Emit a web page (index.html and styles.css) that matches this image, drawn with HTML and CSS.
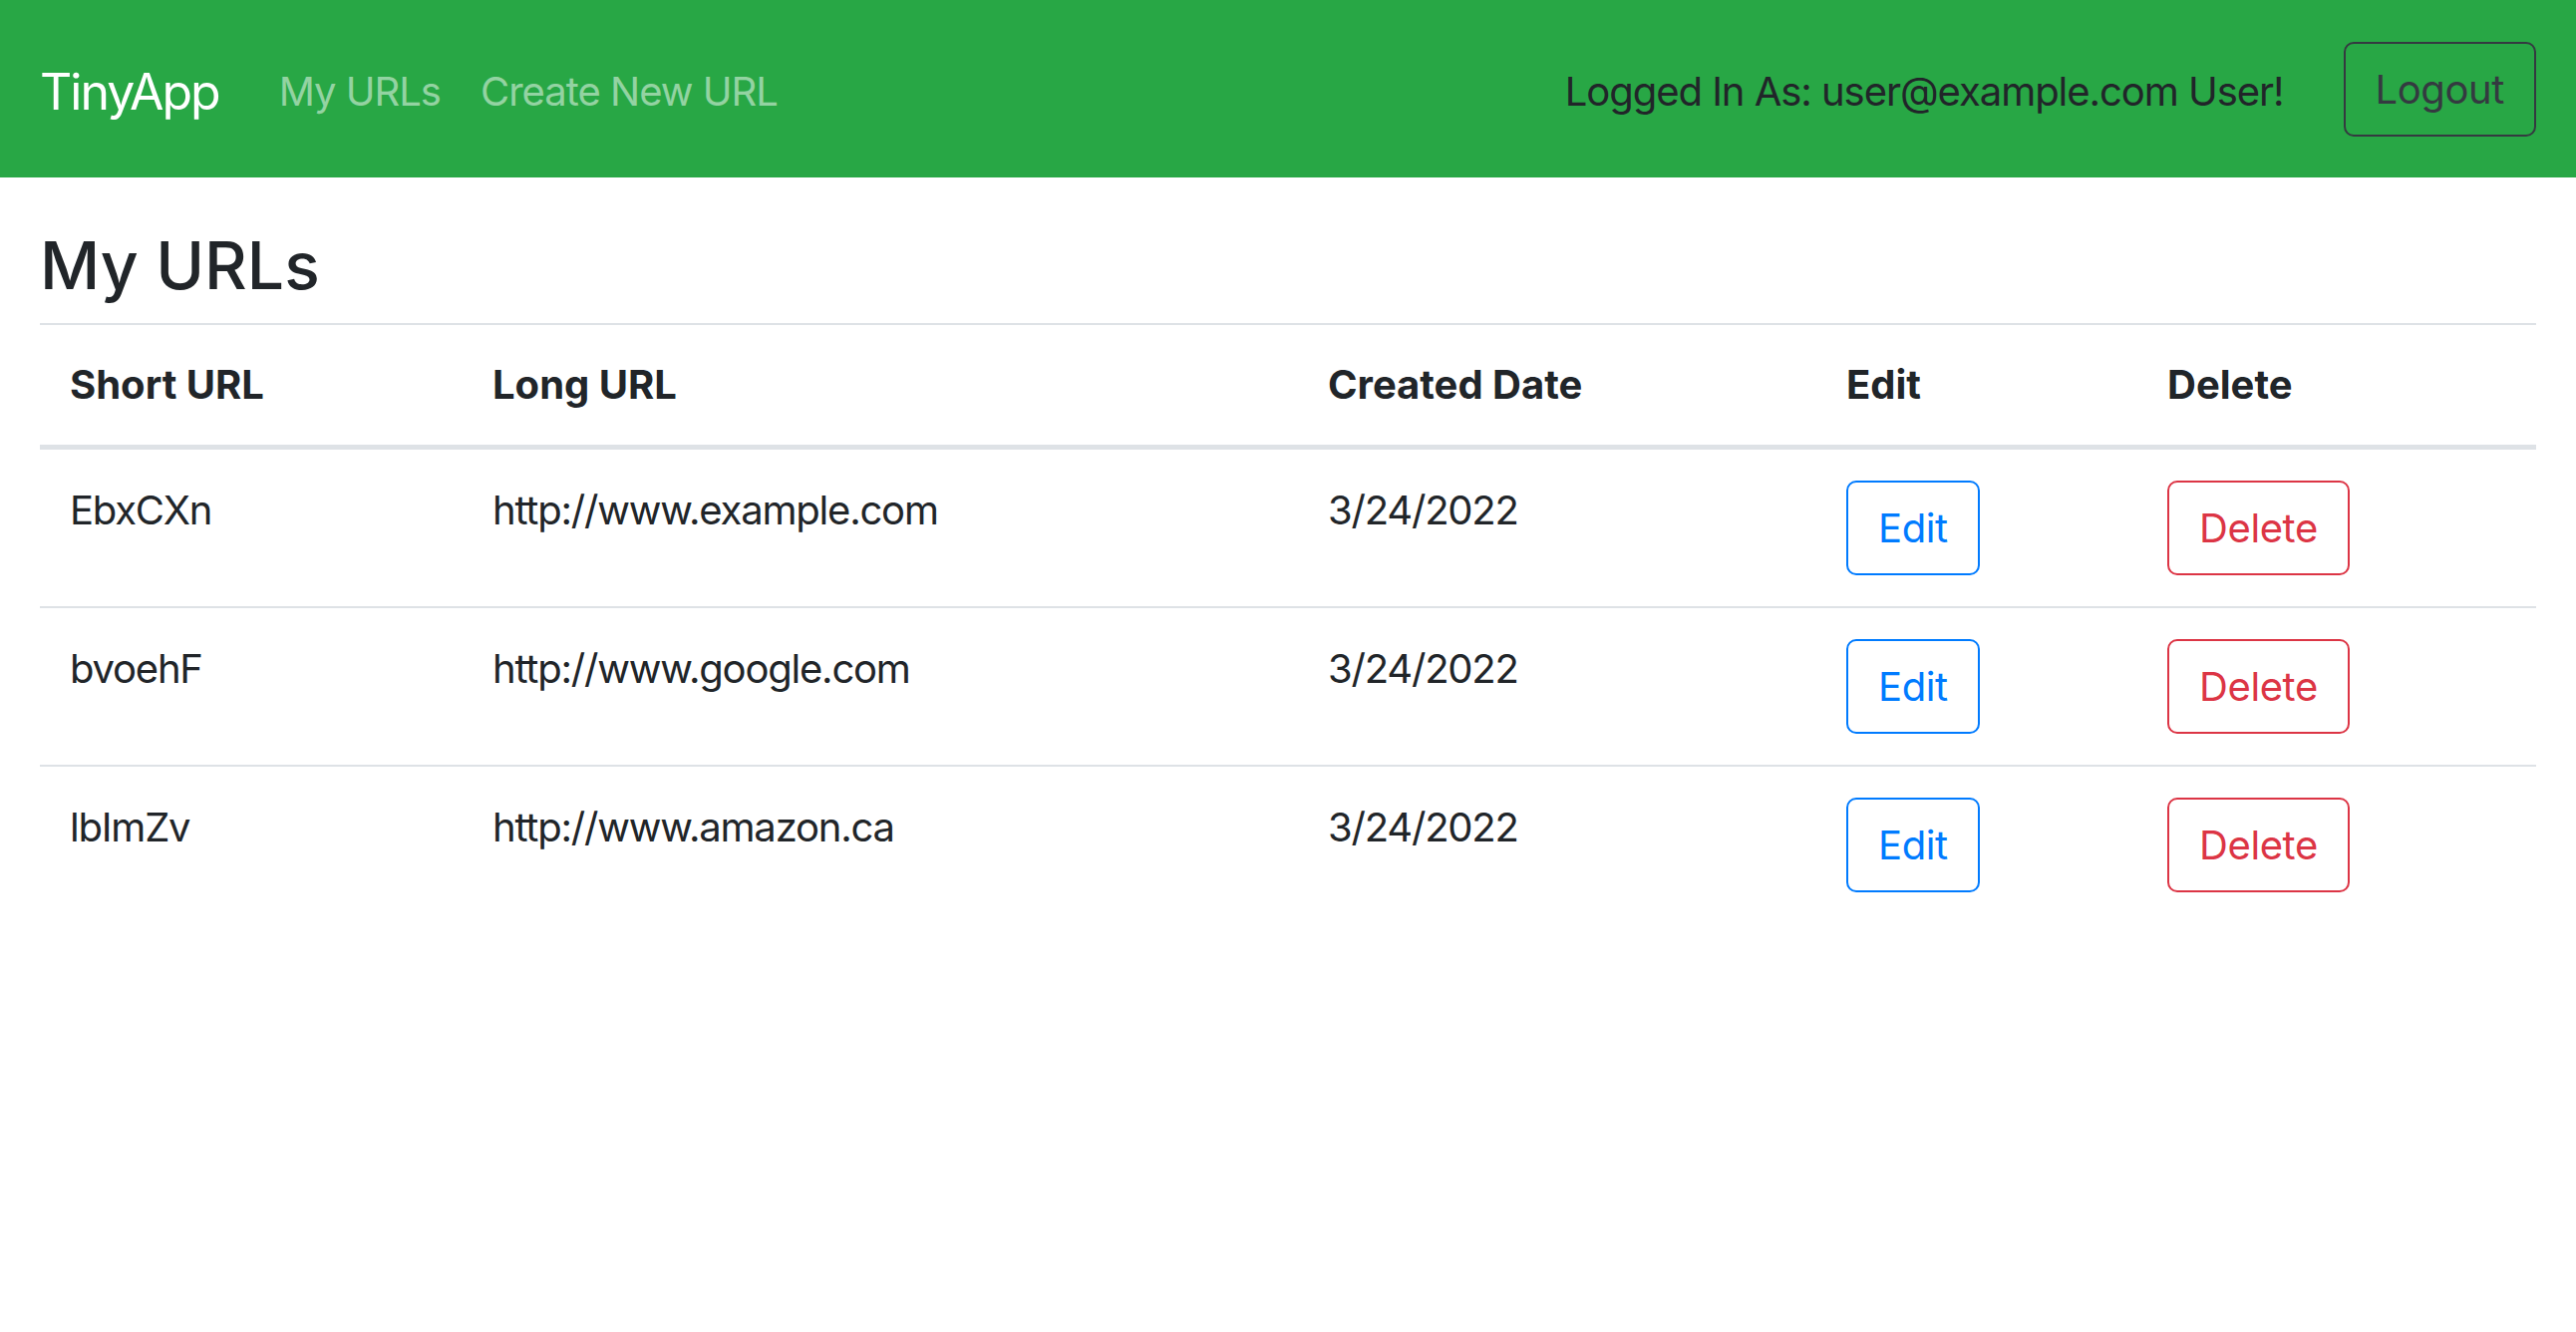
FILE: index.html
```html
<!DOCTYPE html>
<html lang="en">
<head>
<meta charset="utf-8">
<title>TinyApp</title>
<link rel="stylesheet" href="styles.css">
</head>
<body>
<nav class="navbar">
  <a class="brand" href="#">TinyApp</a>
  <div class="nav-links">
    <a class="nav-link" href="#">My URLs</a>
    <a class="nav-link" href="#">Create New URL</a>
  </div>
  <div class="nav-right">
    <span class="user-text">Logged In As: user@example.com User!</span>
    <button class="btn btn-dark-outline" type="button">Logout</button>
  </div>
</nav>
<main class="content">
  <h1 class="title">My URLs</h1>
  <table class="url-table">
    <thead>
      <tr>
        <th class="col-short">Short URL</th>
        <th class="col-long">Long URL</th>
        <th class="col-date">Created Date</th>
        <th class="col-edit">Edit</th>
        <th class="col-delete">Delete</th>
      </tr>
    </thead>
    <tbody>
      <tr>
        <td>EbxCXn</td>
        <td>http://www.example.com</td>
        <td>3/24/2022</td>
        <td><button class="btn btn-blue-outline" type="button">Edit</button></td>
        <td><button class="btn btn-red-outline" type="button">Delete</button></td>
      </tr>
      <tr>
        <td>bvoehF</td>
        <td>http://www.google.com</td>
        <td>3/24/2022</td>
        <td><button class="btn btn-blue-outline" type="button">Edit</button></td>
        <td><button class="btn btn-red-outline" type="button">Delete</button></td>
      </tr>
      <tr>
        <td>lbImZv</td>
        <td>http://www.amazon.ca</td>
        <td>3/24/2022</td>
        <td><button class="btn btn-blue-outline" type="button">Edit</button></td>
        <td><button class="btn btn-red-outline" type="button">Delete</button></td>
      </tr>
    </tbody>
  </table>
</main>
</body>
</html>
```

FILE: styles.css
```css
* { box-sizing: border-box; }

html, body {
  margin: 0;
  padding: 0;
  background: #ffffff;
}

body {
  font-family: "Inter", "Roboto", "Liberation Sans", sans-serif;
  font-size: 40px;
  line-height: 60px;
  color: #212529;
  letter-spacing: -0.03em;
}

.navbar {
  display: flex;
  align-items: center;
  height: 178px;
  padding: 0 40px;
  background: #28a745;
}

.brand {
  font-size: 50px;
  line-height: 75px;
  color: #ffffff;
  text-decoration: none;
  margin-right: 40px;
  padding-top: 6px;
  letter-spacing: -0.04em;
}

.nav-links {
  display: flex;
  padding-top: 6px;
}

.nav-link {
  color: rgba(255, 255, 255, 0.5);
  text-decoration: none;
  padding: 0 20px;
  letter-spacing: -0.025em;
}

.nav-right {
  margin-left: auto;
  display: flex;
  align-items: center;
}

.user-text {
  margin-right: 60px;
  padding-top: 6px;
  color: #212529;
  letter-spacing: -0.026em;
}

.btn {
  font-family: inherit;
  font-size: 40px;
  line-height: 61px;
  padding: 15px 30px;
  border-radius: 10px;
  border: 2px solid transparent;
  background: transparent;
  cursor: pointer;
  letter-spacing: -0.01em;
}

.btn-dark-outline {
  color: #343a40;
  border-color: #343a40;
}

.btn-blue-outline {
  color: #007bff;
  border-color: #007bff;
}

.btn-red-outline {
  color: #dc3545;
  border-color: #dc3545;
}

.content {
  padding: 51px 40px 0;
}

.title {
  margin: 0 0 20px;
  font-size: 66px;
  line-height: 75px;
  font-weight: 500;
  letter-spacing: 0;
}

.url-table {
  width: 100%;
  border-collapse: collapse;
  table-layout: fixed;
}

.url-table th,
.url-table td {
  text-align: left;
  vertical-align: top;
  padding: 30px 30px;
  border-top: 2px solid #dee2e6;
}

.url-table th {
  font-weight: 700;
  letter-spacing: 0;
  border-bottom: 5px solid #dee2e6;
}

.url-table td {
  padding: 31px 30px;
}

.col-short { width: 424px; }
.col-long { width: 838px; }
.col-date { width: 520px; }
.col-edit { width: 322px; }
.col-delete { width: 400px; }
```
